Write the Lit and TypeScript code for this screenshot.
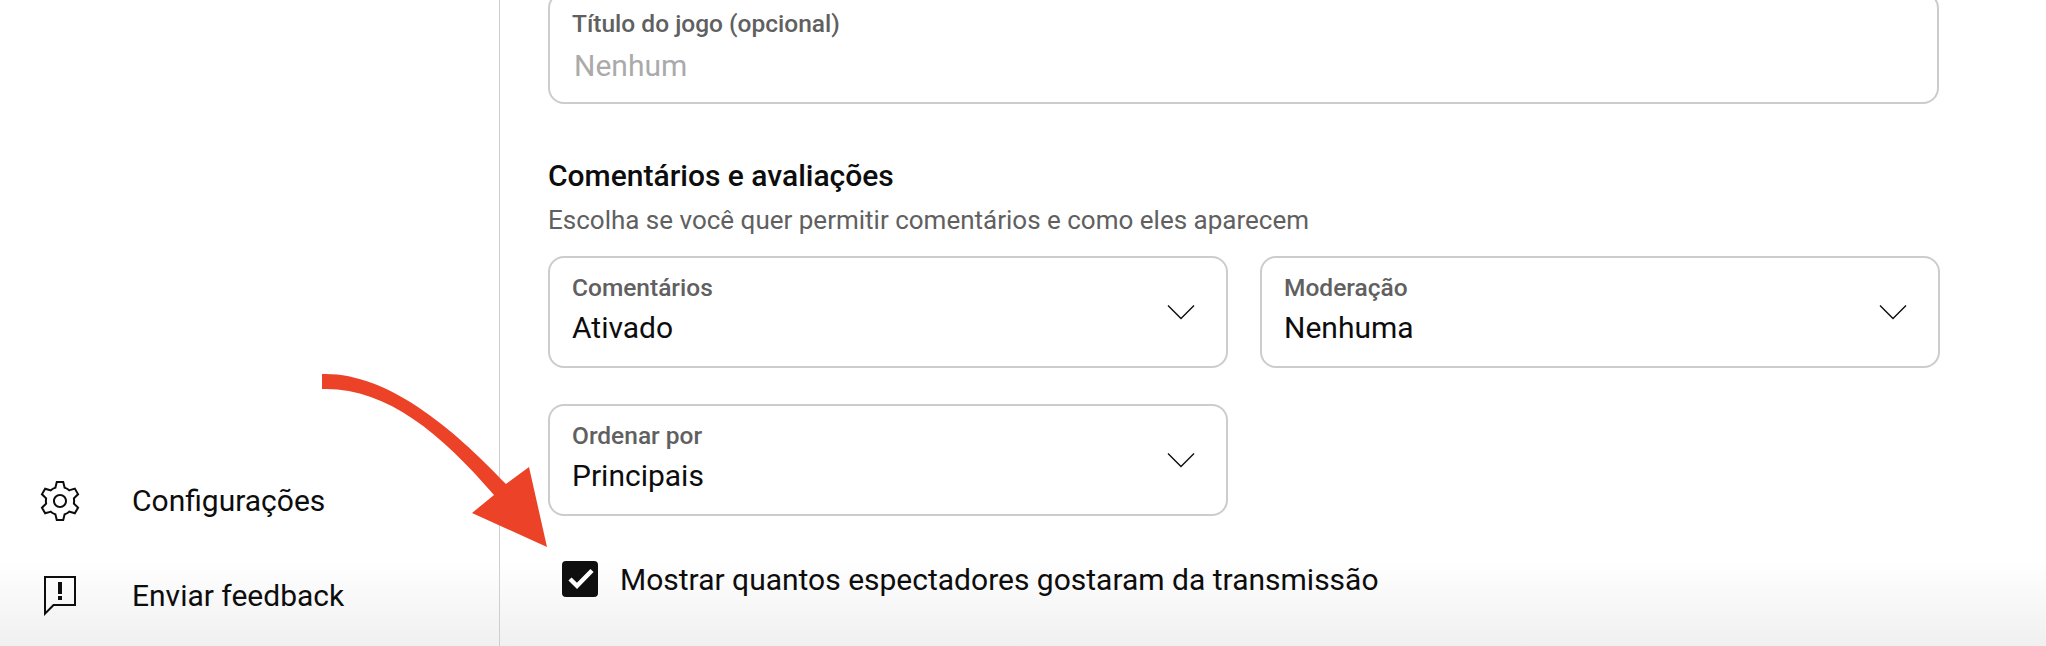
import { LitElement, html, css, svg } from "lit";
import { customElement } from "lit/decorators.js";

const chevron = svg`<path d="M5.5 8.7 12 15.2 18.5 8.7" fill="none" stroke="#0d0d0d" stroke-width=".7"/>`;
const gear = svg`<path d="M12 9.5c1.38 0 2.5 1.12 2.5 2.5s-1.12 2.5-2.5 2.5-2.5-1.12-2.5-2.5 1.12-2.5 2.5-2.5m0-1c-1.93 0-3.5 1.57-3.5 3.5s1.57 3.5 3.5 3.5 3.5-1.57 3.5-3.5-1.57-3.5-3.5-3.5zM13.22 3l.55 2.2.13.51.5.18c.61.23 1.19.56 1.72.98l.4.32.5-.14 2.17-.62 1.22 2.11-1.63 1.59-.37.36.08.51c.05.32.08.64.08.98s-.03.66-.08.98l-.08.51.37.36 1.63 1.59-1.22 2.11-2.17-.62-.5-.14-.4.32c-.53.43-1.11.76-1.72.98l-.5.18-.13.51-.55 2.24h-2.44l-.55-2.2-.13-.51-.5-.18c-.6-.23-1.18-.56-1.72-.99l-.4-.32-.5.14-2.17.62-1.21-2.12 1.63-1.59.37-.36-.08-.51c-.05-.32-.08-.65-.08-.98s.03-.66.08-.98l.08-.51-.37-.36L3.6 8.56l1.22-2.11 2.17.62.5.14.4-.32c.53-.44 1.11-.77 1.72-.99l.5-.18.13-.51.54-2.21h2.44M14 2h-4l-.74 2.96c-.73.27-1.4.66-2 1.14l-2.92-.83-2 3.46 2.19 2.13c-.06.37-.09.75-.09 1.14s.03.77.09 1.14l-2.19 2.13 2 3.46 2.92-.83c.6.48 1.27.87 2 1.14L10 22h4l.74-2.96c.73-.27 1.4-.66 2-1.14l2.92.83 2-3.46-2.19-2.13c.06-.37.09-.75.09-1.14s-.03-.77-.09-1.14l2.19-2.13-2-3.46-2.92.83c-.6-.48-1.27-.87-2-1.14L14 2z"/>`;
const flag = svg`<path d="M13 14h-2v-2h2v2zm0-9h-2v6h2V5zm6-2H5v16.59l3.29-3.29.3-.3H19V3m1-1v15H9l-5 5V2h16z"/>`;

@customElement("app-root")
export class AppRoot extends LitElement {
  static styles = css`
    :host {
      display: flex;
      position: relative;
      width: 2046px;
      height: 646px;
      overflow: hidden;
      font-family: Roboto, "Liberation Sans", sans-serif;
      color: #0d0d0d;
      background: linear-gradient(to bottom, #ffffff 0, #ffffff 560px, #f0f0f0 646px);
    }
    .side {
      box-sizing: border-box;
      width: 500px;
      flex: none;
      border-right: 1px solid #cfcfcf;
      display: flex;
      flex-direction: column;
      justify-content: flex-end;
      padding: 0 0 3px 36px;
    }
    .nav {
      height: 95px;
      display: flex;
      align-items: center;
      gap: 48px;
      font-size: 30px;
    }
    .nav svg { width: 48px; height: 48px; fill: #0d0d0d; flex: none; }
    .main {
      flex: 1;
      min-width: 0;
      padding: 0 107px 0 48px;
    }
    .field {
      box-sizing: border-box;
      height: 112px;
      border: 2px solid #cccccc;
      border-radius: 16px;
      padding: 0 22px;
      display: flex;
      align-items: center;
    }
    .title-field { margin-top: -8px; display: block; padding-top: 14px; }
    .text { flex: 1; min-width: 0; margin-top: -4px; }
    .label { font-size: 24.5px; line-height: 32px; color: #606060; font-weight: 500; }
    .value { font-size: 30px; line-height: 40px; margin-top: 4px; }
    .placeholder { color: #aaaaaa; margin: 6px 0 0 2px; }
    .field svg { width: 48px; height: 48px; flex: none; margin-right: -1px; }
    h2 { margin: 53px 0 0; font-size: 30px; line-height: 38px; font-weight: 500; }
    .sub { font-size: 26px; line-height: 34px; color: #606060; margin-top: 8px; }
    .grid {
      display: grid;
      grid-template-columns: 680px 680px;
      gap: 36px 32px;
      margin-top: 19px;
    }
    .check {
      display: flex;
      align-items: center;
      gap: 22px;
      margin: 45px 0 0 14px;
      font-size: 30px;
      height: 36px;
    }
    .box {
      width: 36px;
      height: 36px;
      border-radius: 4px;
      background: #0f0f0f;
      flex: none;
    }
    .box svg { display: block; width: 36px; height: 36px; }
    .arrow {
      position: absolute;
      left: 0;
      top: 0;
      width: 2046px;
      height: 646px;
      pointer-events: none;
    }
  `;

  render() {
    return html`
      <aside class="side">
        <div class="nav"><svg viewBox="0 0 24 24">${gear}</svg><span>Configurações</span></div>
        <div class="nav"><svg viewBox="0 0 24 24">${flag}</svg><span>Enviar feedback</span></div>
      </aside>
      <main class="main">
        <div class="field title-field">
          <div class="label">Título do jogo (opcional)</div>
          <div class="value placeholder">Nenhum</div>
        </div>
        <h2>Comentários e avaliações</h2>
        <div class="sub">Escolha se você quer permitir comentários e como eles aparecem</div>
        <div class="grid">
          ${[["Comentários", "Ativado"], ["Moderação", "Nenhuma"], ["Ordenar por", "Principais"]].map(
            ([l, v]) => html`
              <div class="field">
                <div class="text"><div class="label">${l}</div><div class="value">${v}</div></div>
                <svg viewBox="0 0 24 24">${chevron}</svg>
              </div>
            `
          )}
        </div>
        <div class="check">
          <div class="box">
            <svg viewBox="0 0 36 36"><path d="M8 18l7 6.8L30 9.5" fill="none" stroke="#fff" stroke-width="4.4"/></svg>
          </div>
          <span>Mostrar quantos espectadores gostaram da transmissão</span>
        </div>
      </main>
      <svg class="arrow" viewBox="0 0 2046 646">
        <path fill="#ec4227" d="M322 374C385 372 450 425 506 484L529 467L547 547L472 513L494 495C440 432 385 387 322 389Z"/>
      </svg>
    `;
  }
}
